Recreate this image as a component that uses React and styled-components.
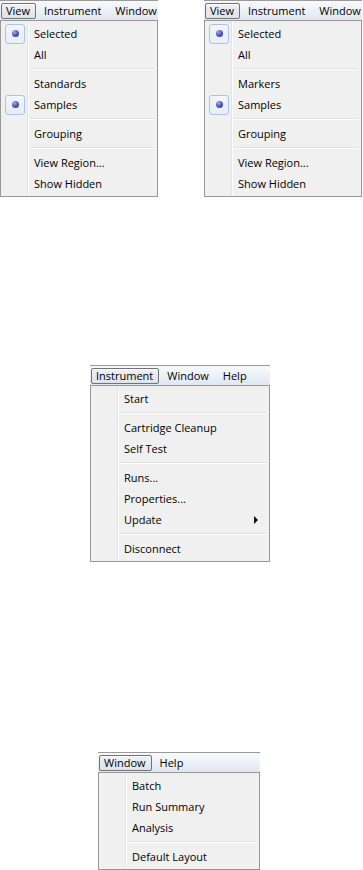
import React from 'react';
import styled, { createGlobalStyle } from 'styled-components';

const GlobalStyle = createGlobalStyle`
  html, body {
    margin: 0;
    padding: 0;
    background: #ffffff;
  }
  body {
    font-family: "Open Sans", "Noto Sans", sans-serif;
    font-size: 11px;
    color: #000;
  }
`;

const menus = {
  viewA: {
    bar: ['View', 'Instrument', 'Window'],
    items: [
      { label: 'Selected', checked: true },
      { label: 'All' },
      '-',
      { label: 'Standards' },
      { label: 'Samples', checked: true },
      '-',
      { label: 'Grouping' },
      '-',
      { label: 'View Region...' },
      { label: 'Show Hidden' },
    ],
  },
  viewB: {
    bar: ['View', 'Instrument', 'Window'],
    items: [
      { label: 'Selected', checked: true },
      { label: 'All' },
      '-',
      { label: 'Markers' },
      { label: 'Samples', checked: true },
      '-',
      { label: 'Grouping' },
      '-',
      { label: 'View Region...' },
      { label: 'Show Hidden' },
    ],
  },
  instrument: {
    bar: ['Instrument', 'Window', 'Help'],
    items: [
      { label: 'Start' },
      '-',
      { label: 'Cartridge Cleanup' },
      { label: 'Self Test' },
      '-',
      { label: 'Runs...' },
      { label: 'Properties...' },
      { label: 'Update', submenu: true },
      '-',
      { label: 'Disconnect' },
    ],
  },
  window: {
    bar: ['Window', 'Help'],
    items: [
      { label: 'Batch' },
      { label: 'Run Summary' },
      { label: 'Analysis' },
      '-',
      { label: 'Default Layout' },
    ],
  },
};

const Page = styled.div`
  width: 363px;
  height: 870px;
  overflow: hidden;
  display: flex;
  flex-direction: column;
`;

const TopRow = styled.div`
  display: flex;
  gap: 46px;
`;

const Panel = styled.div`
  width: ${(p) => p.$width}px;
  margin-left: ${(p) => p.$left || 0}px;
  margin-top: ${(p) => p.$top || 0}px;
  flex-shrink: 0;
  overflow: hidden;
`;

const MenuBar = styled.div`
  height: 19px;
  border-top: 1px solid #9a9a9a;
  background: linear-gradient(#f7f9fc 0%, #eef2f8 45%, #dfe7f3 100%);
  display: flex;
  align-items: center;
  gap: 3px;
  padding-left: 1px;
  white-space: nowrap;
`;

const BarItem = styled.div`
  height: 14px;
  line-height: 14px;
  padding: 0 5px 0 4px;
  border: 1px solid ${(p) => (p.$active ? '#6f7378' : 'transparent')};
  border-radius: 2px;
  background: ${(p) =>
    p.$active ? 'linear-gradient(#eef1f5, #dde3ea)' : 'transparent'};
  box-shadow: ${(p) => (p.$active ? 'inset 0 1px 0 #ffffff' : 'none')};
`;

const Dropdown = styled.div`
  border: 1px solid #979797;
  padding: 2px;
  background: linear-gradient(
    to right,
    #f0f0f0 0px,
    #f0f0f0 26px,
    #e2e3e3 26px,
    #e2e3e3 27px,
    #ffffff 27px,
    #ffffff 28px,
    #f0f0f0 28px
  );
`;

const Item = styled.div`
  height: 21px;
  display: flex;
  align-items: center;
  white-space: nowrap;
`;

const Gutter = styled.div`
  width: 28px;
  height: 21px;
  display: flex;
  align-items: center;
  flex-shrink: 0;
`;

const CheckBox = styled.div`
  width: 18px;
  height: 18px;
  margin-left: 2px;
  border: 1px solid #a8c4e8;
  border-radius: 3px;
  background: linear-gradient(#f3f6fb, #e6edf7);
  display: flex;
  align-items: center;
  justify-content: center;
`;

const Dot = styled.div`
  width: 7px;
  height: 7px;
  border-radius: 50%;
  background: radial-gradient(circle at 35% 30%, #a7abee 0%, #5a5ec0 45%, #23276e 100%);
`;

const Label = styled.span`
  padding-left: 3px;
  flex: 1;
`;

const Arrow = styled.span`
  width: 0;
  height: 0;
  border-top: 4px solid transparent;
  border-bottom: 4px solid transparent;
  border-left: 4px solid #111;
  margin-right: 9px;
`;

const Separator = styled.div`
  height: 8px;
  display: flex;
  align-items: center;
  padding-left: 27px;
  padding-right: 1px;

  &::after {
    content: '';
    flex: 1;
    border-top: 1px solid #e0e0e0;
    border-bottom: 1px solid #ffffff;
  }
`;

function Menu({ menu, width, left, top }) {
  return (
    <Panel $width={width} $left={left} $top={top}>
      <MenuBar>
        {menu.bar.map((name, i) => (
          <BarItem key={name} $active={i === 0}>
            {name}
          </BarItem>
        ))}
      </MenuBar>
      <Dropdown>
        {menu.items.map((item, i) =>
          item === '-' ? (
            <Separator key={i} />
          ) : (
            <Item key={i}>
              <Gutter>
                {item.checked && (
                  <CheckBox>
                    <Dot />
                  </CheckBox>
                )}
              </Gutter>
              <Label>{item.label}</Label>
              {item.submenu && <Arrow />}
            </Item>
          )
        )}
      </Dropdown>
    </Panel>
  );
}

export default function App() {
  return (
    <>
      <GlobalStyle />
      <Page>
        <TopRow>
          <Menu menu={menus.viewA} width={158} />
          <Menu menu={menus.viewB} width={158} />
        </TopRow>
        <Menu menu={menus.instrument} width={180} left={90} top={168} />
        <Menu menu={menus.window} width={162} left={98} top={190} />
      </Page>
    </>
  );
}
